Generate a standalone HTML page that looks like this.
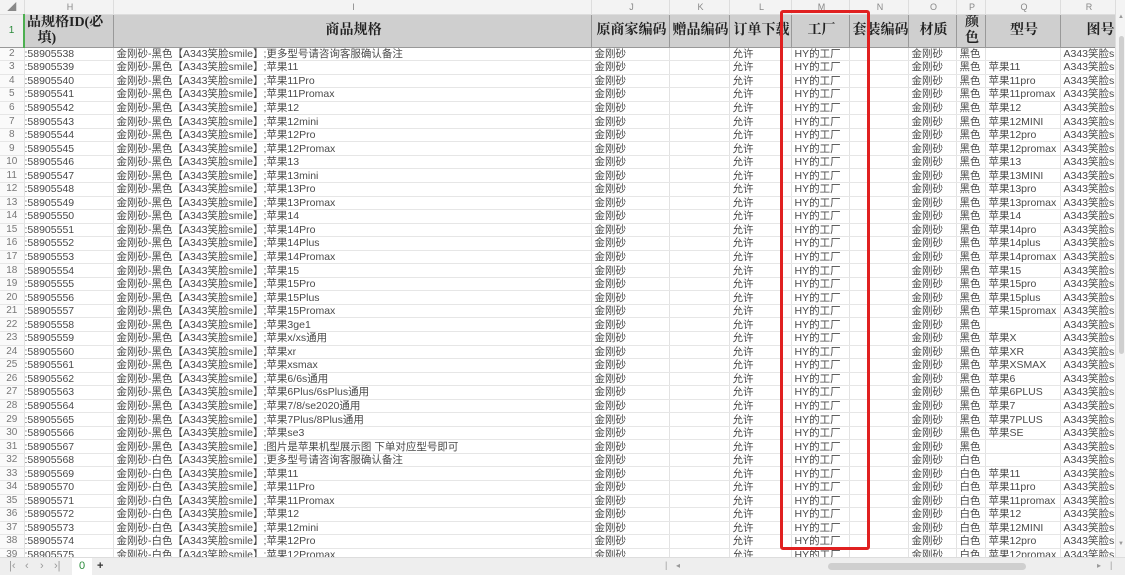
<!DOCTYPE html>
<html><head><meta charset="utf-8">
<style>
*{margin:0;padding:0;box-sizing:border-box}
body{width:1125px;height:575px;overflow:hidden;background:#fff;font-family:"Liberation Sans","Noto Sans CJK SC",sans-serif;position:relative}
table{border-collapse:collapse;table-layout:fixed;position:absolute;left:0;top:0;width:1115px}
td{border-right:1px solid #e2e2e2;border-bottom:1px solid #e6e6e6;height:13.56px;font-size:10.5px;color:#4a4a4a;white-space:nowrap;overflow:hidden;padding:0 0 0 3px;line-height:12px}
tr.cl td{height:14px;background:#f3f3f3;color:#888;text-align:center;font-size:9px;border-color:#ddd}
tr.hd td{height:33px;background:#cfcfcf;color:#222;font-family:"Liberation Serif","Noto Serif CJK SC",serif;font-weight:bold;font-size:14px;text-align:center;line-height:16px;border-right:1px solid #999;border-bottom:1px solid #999}
td.n{color:#777;text-align:center;padding:0;background:#fafafa;font-size:10px}
tr.hd td.n{background:#f0f0f0;color:#2a8a3a;font-family:"Liberation Sans",sans-serif;font-weight:normal;font-size:10px;border-right:2px solid #4caf50}
td.h{text-indent:-3px}
.box{position:absolute;left:780px;top:10px;width:90px;height:540px;border:3px solid #e02020;border-radius:3px}
.vs{position:absolute;left:1115px;top:0;width:10px;height:557px;background:#f4f4f4;border-left:1px solid #ddd}
.vs .t{position:absolute;left:3px;top:36px;width:5px;height:318px;background:#cfcfcf;border-radius:3px}
.bb{position:absolute;left:0;top:557px;width:1125px;height:18px;background:#eeeeee;border-top:1px solid #ddd;font-size:11px;color:#999}
.bb span{position:absolute;top:2px}
.tab{position:absolute;left:72px;top:0;width:20px;height:18px;background:#fff;color:#2a8a3a;text-align:center;font-size:11px;line-height:17px}
.hs{position:absolute;left:828px;top:5px;width:198px;height:7px;background:#cfcfcf;border-radius:4px}
</style></head><body>
<table>
<colgroup><col style="width:24px"><col style="width:89px"><col style="width:478px"><col style="width:78px"><col style="width:60px"><col style="width:62px"><col style="width:58px"><col style="width:59px"><col style="width:48px"><col style="width:29px"><col style="width:75px"><col style="width:55px"></colgroup>
<tr class="cl"><td class="n" style="background:#f3f3f3">◢</td><td>H</td><td>I</td><td>J</td><td>K</td><td>L</td><td>M</td><td>N</td><td>O</td><td>P</td><td>Q</td><td>R</td></tr>
<tr class="hd"><td class="n">1</td><td style="text-align:left;padding-left:2px">品规格ID(必<br>&nbsp;&nbsp;&nbsp;填)</td><td>商品规格</td><td>原商家编码</td><td>赠品编码</td><td>订单下载</td><td>工厂</td><td>套装编码</td><td>材质</td><td>颜<br>色</td><td>型号</td><td style="text-align:right">图号</td></tr>
<tr><td class="n">2</td><td class="h">:58905538</td><td>金刚砂-黑色【A343笑脸smile】;更多型号请咨询客服确认备注</td><td>金刚砂</td><td></td><td>允许</td><td>HY的工厂</td><td></td><td>金刚砂</td><td>黑色</td><td></td><td>A343笑脸sm</td></tr>
<tr><td class="n">3</td><td class="h">:58905539</td><td>金刚砂-黑色【A343笑脸smile】;苹果11</td><td>金刚砂</td><td></td><td>允许</td><td>HY的工厂</td><td></td><td>金刚砂</td><td>黑色</td><td>苹果11</td><td>A343笑脸sm</td></tr>
<tr><td class="n">4</td><td class="h">:58905540</td><td>金刚砂-黑色【A343笑脸smile】;苹果11Pro</td><td>金刚砂</td><td></td><td>允许</td><td>HY的工厂</td><td></td><td>金刚砂</td><td>黑色</td><td>苹果11pro</td><td>A343笑脸sm</td></tr>
<tr><td class="n">5</td><td class="h">:58905541</td><td>金刚砂-黑色【A343笑脸smile】;苹果11Promax</td><td>金刚砂</td><td></td><td>允许</td><td>HY的工厂</td><td></td><td>金刚砂</td><td>黑色</td><td>苹果11promax</td><td>A343笑脸sm</td></tr>
<tr><td class="n">6</td><td class="h">:58905542</td><td>金刚砂-黑色【A343笑脸smile】;苹果12</td><td>金刚砂</td><td></td><td>允许</td><td>HY的工厂</td><td></td><td>金刚砂</td><td>黑色</td><td>苹果12</td><td>A343笑脸sm</td></tr>
<tr><td class="n">7</td><td class="h">:58905543</td><td>金刚砂-黑色【A343笑脸smile】;苹果12mini</td><td>金刚砂</td><td></td><td>允许</td><td>HY的工厂</td><td></td><td>金刚砂</td><td>黑色</td><td>苹果12MINI</td><td>A343笑脸sm</td></tr>
<tr><td class="n">8</td><td class="h">:58905544</td><td>金刚砂-黑色【A343笑脸smile】;苹果12Pro</td><td>金刚砂</td><td></td><td>允许</td><td>HY的工厂</td><td></td><td>金刚砂</td><td>黑色</td><td>苹果12pro</td><td>A343笑脸sm</td></tr>
<tr><td class="n">9</td><td class="h">:58905545</td><td>金刚砂-黑色【A343笑脸smile】;苹果12Promax</td><td>金刚砂</td><td></td><td>允许</td><td>HY的工厂</td><td></td><td>金刚砂</td><td>黑色</td><td>苹果12promax</td><td>A343笑脸sm</td></tr>
<tr><td class="n">10</td><td class="h">:58905546</td><td>金刚砂-黑色【A343笑脸smile】;苹果13</td><td>金刚砂</td><td></td><td>允许</td><td>HY的工厂</td><td></td><td>金刚砂</td><td>黑色</td><td>苹果13</td><td>A343笑脸sm</td></tr>
<tr><td class="n">11</td><td class="h">:58905547</td><td>金刚砂-黑色【A343笑脸smile】;苹果13mini</td><td>金刚砂</td><td></td><td>允许</td><td>HY的工厂</td><td></td><td>金刚砂</td><td>黑色</td><td>苹果13MINI</td><td>A343笑脸sm</td></tr>
<tr><td class="n">12</td><td class="h">:58905548</td><td>金刚砂-黑色【A343笑脸smile】;苹果13Pro</td><td>金刚砂</td><td></td><td>允许</td><td>HY的工厂</td><td></td><td>金刚砂</td><td>黑色</td><td>苹果13pro</td><td>A343笑脸sm</td></tr>
<tr><td class="n">13</td><td class="h">:58905549</td><td>金刚砂-黑色【A343笑脸smile】;苹果13Promax</td><td>金刚砂</td><td></td><td>允许</td><td>HY的工厂</td><td></td><td>金刚砂</td><td>黑色</td><td>苹果13promax</td><td>A343笑脸sm</td></tr>
<tr><td class="n">14</td><td class="h">:58905550</td><td>金刚砂-黑色【A343笑脸smile】;苹果14</td><td>金刚砂</td><td></td><td>允许</td><td>HY的工厂</td><td></td><td>金刚砂</td><td>黑色</td><td>苹果14</td><td>A343笑脸sm</td></tr>
<tr><td class="n">15</td><td class="h">:58905551</td><td>金刚砂-黑色【A343笑脸smile】;苹果14Pro</td><td>金刚砂</td><td></td><td>允许</td><td>HY的工厂</td><td></td><td>金刚砂</td><td>黑色</td><td>苹果14pro</td><td>A343笑脸sm</td></tr>
<tr><td class="n">16</td><td class="h">:58905552</td><td>金刚砂-黑色【A343笑脸smile】;苹果14Plus</td><td>金刚砂</td><td></td><td>允许</td><td>HY的工厂</td><td></td><td>金刚砂</td><td>黑色</td><td>苹果14plus</td><td>A343笑脸sm</td></tr>
<tr><td class="n">17</td><td class="h">:58905553</td><td>金刚砂-黑色【A343笑脸smile】;苹果14Promax</td><td>金刚砂</td><td></td><td>允许</td><td>HY的工厂</td><td></td><td>金刚砂</td><td>黑色</td><td>苹果14promax</td><td>A343笑脸sm</td></tr>
<tr><td class="n">18</td><td class="h">:58905554</td><td>金刚砂-黑色【A343笑脸smile】;苹果15</td><td>金刚砂</td><td></td><td>允许</td><td>HY的工厂</td><td></td><td>金刚砂</td><td>黑色</td><td>苹果15</td><td>A343笑脸sm</td></tr>
<tr><td class="n">19</td><td class="h">:58905555</td><td>金刚砂-黑色【A343笑脸smile】;苹果15Pro</td><td>金刚砂</td><td></td><td>允许</td><td>HY的工厂</td><td></td><td>金刚砂</td><td>黑色</td><td>苹果15pro</td><td>A343笑脸sm</td></tr>
<tr><td class="n">20</td><td class="h">:58905556</td><td>金刚砂-黑色【A343笑脸smile】;苹果15Plus</td><td>金刚砂</td><td></td><td>允许</td><td>HY的工厂</td><td></td><td>金刚砂</td><td>黑色</td><td>苹果15plus</td><td>A343笑脸sm</td></tr>
<tr><td class="n">21</td><td class="h">:58905557</td><td>金刚砂-黑色【A343笑脸smile】;苹果15Promax</td><td>金刚砂</td><td></td><td>允许</td><td>HY的工厂</td><td></td><td>金刚砂</td><td>黑色</td><td>苹果15promax</td><td>A343笑脸sm</td></tr>
<tr><td class="n">22</td><td class="h">:58905558</td><td>金刚砂-黑色【A343笑脸smile】;苹果3ge1</td><td>金刚砂</td><td></td><td>允许</td><td>HY的工厂</td><td></td><td>金刚砂</td><td>黑色</td><td></td><td>A343笑脸sm</td></tr>
<tr><td class="n">23</td><td class="h">:58905559</td><td>金刚砂-黑色【A343笑脸smile】;苹果x/xs通用</td><td>金刚砂</td><td></td><td>允许</td><td>HY的工厂</td><td></td><td>金刚砂</td><td>黑色</td><td>苹果X</td><td>A343笑脸sm</td></tr>
<tr><td class="n">24</td><td class="h">:58905560</td><td>金刚砂-黑色【A343笑脸smile】;苹果xr</td><td>金刚砂</td><td></td><td>允许</td><td>HY的工厂</td><td></td><td>金刚砂</td><td>黑色</td><td>苹果XR</td><td>A343笑脸sm</td></tr>
<tr><td class="n">25</td><td class="h">:58905561</td><td>金刚砂-黑色【A343笑脸smile】;苹果xsmax</td><td>金刚砂</td><td></td><td>允许</td><td>HY的工厂</td><td></td><td>金刚砂</td><td>黑色</td><td>苹果XSMAX</td><td>A343笑脸sm</td></tr>
<tr><td class="n">26</td><td class="h">:58905562</td><td>金刚砂-黑色【A343笑脸smile】;苹果6/6s通用</td><td>金刚砂</td><td></td><td>允许</td><td>HY的工厂</td><td></td><td>金刚砂</td><td>黑色</td><td>苹果6</td><td>A343笑脸sm</td></tr>
<tr><td class="n">27</td><td class="h">:58905563</td><td>金刚砂-黑色【A343笑脸smile】;苹果6Plus/6sPlus通用</td><td>金刚砂</td><td></td><td>允许</td><td>HY的工厂</td><td></td><td>金刚砂</td><td>黑色</td><td>苹果6PLUS</td><td>A343笑脸sm</td></tr>
<tr><td class="n">28</td><td class="h">:58905564</td><td>金刚砂-黑色【A343笑脸smile】;苹果7/8/se2020通用</td><td>金刚砂</td><td></td><td>允许</td><td>HY的工厂</td><td></td><td>金刚砂</td><td>黑色</td><td>苹果7</td><td>A343笑脸sm</td></tr>
<tr><td class="n">29</td><td class="h">:58905565</td><td>金刚砂-黑色【A343笑脸smile】;苹果7Plus/8Plus通用</td><td>金刚砂</td><td></td><td>允许</td><td>HY的工厂</td><td></td><td>金刚砂</td><td>黑色</td><td>苹果7PLUS</td><td>A343笑脸sm</td></tr>
<tr><td class="n">30</td><td class="h">:58905566</td><td>金刚砂-黑色【A343笑脸smile】;苹果se3</td><td>金刚砂</td><td></td><td>允许</td><td>HY的工厂</td><td></td><td>金刚砂</td><td>黑色</td><td>苹果SE</td><td>A343笑脸sm</td></tr>
<tr><td class="n">31</td><td class="h">:58905567</td><td>金刚砂-黑色【A343笑脸smile】;图片是苹果机型展示图 下单对应型号即可</td><td>金刚砂</td><td></td><td>允许</td><td>HY的工厂</td><td></td><td>金刚砂</td><td>黑色</td><td></td><td>A343笑脸sm</td></tr>
<tr><td class="n">32</td><td class="h">:58905568</td><td>金刚砂-白色【A343笑脸smile】;更多型号请咨询客服确认备注</td><td>金刚砂</td><td></td><td>允许</td><td>HY的工厂</td><td></td><td>金刚砂</td><td>白色</td><td></td><td>A343笑脸sm</td></tr>
<tr><td class="n">33</td><td class="h">:58905569</td><td>金刚砂-白色【A343笑脸smile】;苹果11</td><td>金刚砂</td><td></td><td>允许</td><td>HY的工厂</td><td></td><td>金刚砂</td><td>白色</td><td>苹果11</td><td>A343笑脸sm</td></tr>
<tr><td class="n">34</td><td class="h">:58905570</td><td>金刚砂-白色【A343笑脸smile】;苹果11Pro</td><td>金刚砂</td><td></td><td>允许</td><td>HY的工厂</td><td></td><td>金刚砂</td><td>白色</td><td>苹果11pro</td><td>A343笑脸sm</td></tr>
<tr><td class="n">35</td><td class="h">:58905571</td><td>金刚砂-白色【A343笑脸smile】;苹果11Promax</td><td>金刚砂</td><td></td><td>允许</td><td>HY的工厂</td><td></td><td>金刚砂</td><td>白色</td><td>苹果11promax</td><td>A343笑脸sm</td></tr>
<tr><td class="n">36</td><td class="h">:58905572</td><td>金刚砂-白色【A343笑脸smile】;苹果12</td><td>金刚砂</td><td></td><td>允许</td><td>HY的工厂</td><td></td><td>金刚砂</td><td>白色</td><td>苹果12</td><td>A343笑脸sm</td></tr>
<tr><td class="n">37</td><td class="h">:58905573</td><td>金刚砂-白色【A343笑脸smile】;苹果12mini</td><td>金刚砂</td><td></td><td>允许</td><td>HY的工厂</td><td></td><td>金刚砂</td><td>白色</td><td>苹果12MINI</td><td>A343笑脸sm</td></tr>
<tr><td class="n">38</td><td class="h">:58905574</td><td>金刚砂-白色【A343笑脸smile】;苹果12Pro</td><td>金刚砂</td><td></td><td>允许</td><td>HY的工厂</td><td></td><td>金刚砂</td><td>白色</td><td>苹果12pro</td><td>A343笑脸sm</td></tr>
<tr><td class="n">39</td><td class="h">:58905575</td><td>金刚砂-白色【A343笑脸smile】;苹果12Promax</td><td>金刚砂</td><td></td><td>允许</td><td>HY的工厂</td><td></td><td>金刚砂</td><td>白色</td><td>苹果12promax</td><td>A343笑脸sm</td></tr>
</table>
<div class="box"></div>
<div class="vs"><div class="t"></div><span style="position:absolute;left:2px;top:14px;font-size:6px;color:#999">▲</span><span style="position:absolute;left:2px;top:541px;font-size:6px;color:#999">▼</span></div>
<div class="bb">
<span style="left:9px">|‹</span><span style="left:25px">‹</span><span style="left:40px">›</span><span style="left:54px">›|</span>
<div class="tab">0</div>
<span style="left:97px;color:#333;font-weight:bold">+</span>
<span style="left:665px;font-size:9px">|</span><span style="left:676px;font-size:8px;top:3px">◂</span>
<div class="hs"></div>
<span style="left:1097px;font-size:8px;top:3px">▸</span><span style="left:1110px;font-size:9px">|</span>
</div>
</body></html>
